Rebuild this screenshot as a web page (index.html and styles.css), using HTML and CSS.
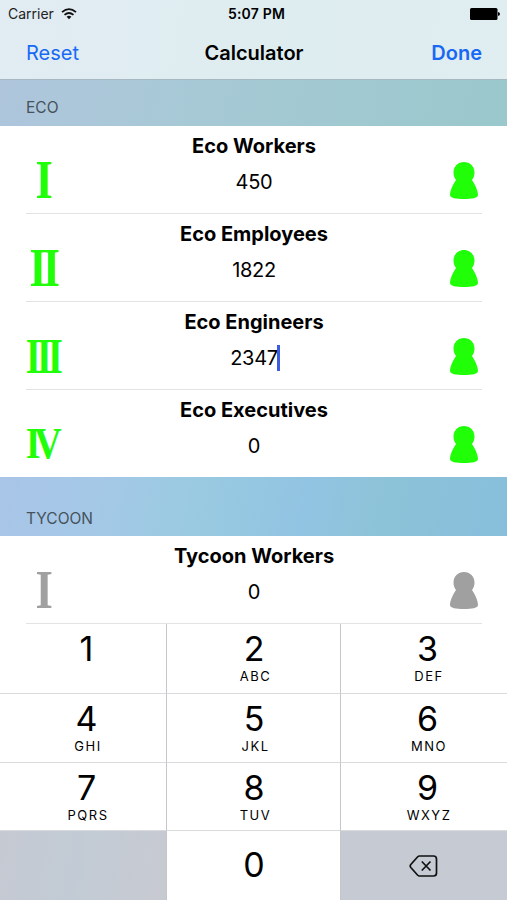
FILE: index.html
```html
<!DOCTYPE html>
<html lang="en">
<head>
    <meta charset="UTF-8">
    <meta name="viewport" content="width=device-width, initial-scale=1.0">
    <title>Calculator</title>
    <link rel="stylesheet" href="styles.css">
</head>
<body>
    <svg class="defs" width="0" height="0">
        <symbol id="person" viewBox="0 0 28 38">
            <path d="M14 0C20 0 24.500 4.500 24.500 10.500C24.500 13.500 23.500 16 22 18C25 22 28 29 28 33C28 36 22 37 14 37S0 36 0 33C0 29 3 22 6 18C4.500 16 3.500 13.500 3.500 10.500C3.500 4.500 8 0 14 0Z"/>
        </symbol>
    </svg>

    <header>
        <div class="status">
            <div class="carrier">
                <span>Carrier</span>
                <svg width="16" height="12" viewBox="0 0 16 12" fill="none" stroke="#111" stroke-width="1.800">
                    <path d="M1 4.100Q8 -1.900 15 4.100M3.500 6.900Q8 3.100 12.500 6.900"/>
                    <path d="M5.600 8.800Q8 6.900 10.400 8.800L8 11.300Z" fill="#111" stroke="none"/>
                </svg>
            </div>
            <div class="time">5:07 PM</div>
            <svg class="battery" width="30" height="12" viewBox="0 0 30 12">
                <rect x="0" y="0" width="27.500" height="12" rx="1.500"/>
                <path d="M28 4Q30 4.500 30 6T28 8Z"/>
            </svg>
        </div>
        <nav>
            <a class="reset">Reset</a>
            <h1>Calculator</h1>
            <a class="done">Done</a>
        </nav>
    </header>

    <h2 class="section eco-head">ECO</h2>
    <ul class="list eco">
        <li>
            <svg class="numeral" width="37" height="40" viewBox="0 0 37 40"><text transform="translate(9.600 37.400) scale(.82 1)" font-size="54.500">I</text></svg>
            <div class="info"><h3>Eco Workers</h3><p>450</p></div>
            <svg class="person" width="28" height="38"><use href="#person"/></svg>
        </li>
        <li>
            <svg class="numeral" width="37" height="40" viewBox="0 0 37 40"><text transform="translate(3.500 37.400) scale(.8 1)" x="0 16.800" font-size="54.500">II</text></svg>
            <div class="info"><h3>Eco Employees</h3><p>1822</p></div>
            <svg class="person" width="28" height="38"><use href="#person"/></svg>
        </li>
        <li>
            <svg class="numeral" width="37" height="40" viewBox="0 0 37 40"><text transform="translate(-.2 35.900) scale(.76 1)" x="0 14.500 29" font-size="51">III</text></svg>
            <div class="info"><h3>Eco Engineers</h3><p>2347<span class="caret"></span></p></div>
            <svg class="person" width="28" height="38"><use href="#person"/></svg>
        </li>
        <li>
            <svg class="numeral" width="37" height="40" viewBox="0 0 37 40"><text transform="translate(-.2 33.200) scale(.87 1)" x="0 9.800" font-size="43.500">IV</text></svg>
            <div class="info"><h3>Eco Executives</h3><p>0</p></div>
            <svg class="person" width="28" height="38"><use href="#person"/></svg>
        </li>
    </ul>

    <h2 class="section tycoon-head">TYCOON</h2>
    <ul class="list tycoon">
        <li>
            <svg class="numeral" width="37" height="40" viewBox="0 0 37 40"><text transform="translate(9.600 37.400) scale(.82 1)" font-size="54.500">I</text></svg>
            <div class="info"><h3>Tycoon Workers</h3><p>0</p></div>
            <svg class="person" width="28" height="38"><use href="#person"/></svg>
        </li>
    </ul>

    <div class="keypad">
        <div class="key"><b>1</b></div>
        <div class="key"><b>2</b><span>ABC</span></div>
        <div class="key"><b>3</b><span>DEF</span></div>
        <div class="key"><b>4</b><span>GHI</span></div>
        <div class="key"><b>5</b><span>JKL</span></div>
        <div class="key"><b>6</b><span>MNO</span></div>
        <div class="key"><b>7</b><span>PQRS</span></div>
        <div class="key"><b>8</b><span>TUV</span></div>
        <div class="key"><b>9</b><span>WXYZ</span></div>
        <div class="key blank"></div>
        <div class="key zero"><b>0</b></div>
        <div class="key delete">
            <svg width="29" height="22" viewBox="0 0 29 22" fill="none" stroke="#111" stroke-width="1.700" stroke-linejoin="round">
                <path d="M10.500 1H24.500Q27.500 1 27.500 4V18Q27.500 21 24.500 21H10.500Q9.500 21 8.500 20L1.800 12.500Q.6 11 1.800 9.500L8.500 2Q9.500 1 10.500 1Z"/>
                <path d="M12.800 6.500L21.500 15.500M21.500 6.500L12.800 15.500"/>
            </svg>
        </div>
    </div>
</body>
</html>
```
FILE: styles.css
```css
body { font-family: Inter, "Liberation Sans", sans-serif; margin: 0; width: 507px; height: 900px; overflow: hidden; background: #fff; color: #000; }
h1, h2, h3, p, ul { margin: 0; padding: 0; }
.defs { display: block; }

header { height: 79px; background: linear-gradient(100deg, #e1ecf3, #deedef 60%, #e0edf1); border-bottom: 1px solid #a6b9c0; }
.status { display: grid; grid-template-columns: 1fr auto 1fr; align-items: center; height: 27px; padding: 0 7px 0 8px; font-size: 14px; }
.carrier { display: flex; align-items: center; gap: 7px; color: #222; }
.time { font-weight: 600; padding-left: 5px; letter-spacing: .2px; }
.battery { justify-self: end; }
nav { display: grid; grid-template-columns: 1fr auto 1fr; align-items: center; height: 51px; padding: 0 25px 0 26px; font-size: 20px; }
nav h1 { font-size: 20px; font-weight: 600; }
nav a { color: #1769f5; }
.done { text-align: right; font-weight: 600; }

.section { box-sizing: border-box; padding-left: 26px; font-size: 15.500px; font-weight: 400; line-height: 20px; color: #45525b; }
.eco-head { height: 46px; padding-top: 18px; background: linear-gradient(100deg, #aec5dc, #aac8d8 25%, #a4c9d3 50%, #9ac8cc); }
.tycoon-head { height: 59px; padding-top: 32px; background: linear-gradient(100deg, #a9c5e8, #a5c8e7 18%, #9acae1 38%, #91c4e2 60%, #8dc3d8 75%, #87bedb); }

.list { list-style: none; }
.list li { position: relative; box-sizing: border-box; display: grid; grid-template-columns: 37px 1fr 37px; height: 88px; padding: 0 25px 0 26px; }
.list li::after { content: ""; position: absolute; left: 26px; right: 25px; bottom: 0; height: 1px; background: #e3e3e5; }
.eco li:last-child::after { display: none; }
.eco { height: 351px; }
.numeral { margin-top: 35px; overflow: visible; font-family: "Liberation Serif", serif; font-weight: 700; }
.person { margin: 36px 0 0 5px; }
.eco svg { fill: #20ff08; }
.tycoon svg { fill: #a0a0a0; }
.info { text-align: center; font-size: 20px; line-height: 24px; }
.info h3 { padding-top: 8px; font-size: 20px; font-weight: 700; }
.info p { padding-top: 12px; letter-spacing: -.3px; }
.caret { display: inline-block; width: 3px; height: 26px; margin: -2px -2px -6px -1px; background: #3c5de0; }

.keypad { display: grid; grid-template-columns: 167px 174px 166px; grid-template-rows: 70px 69px 68px 69px; height: 276px; }
.key { box-sizing: border-box; display: flex; flex-direction: column; align-items: center; border-right: 1px solid #c5c6c9; border-bottom: 1px solid #d9dadc; padding: 4px 0 0 7px; }
.key:nth-child(3n) { border-right: 0; }
.key:nth-child(3n+2) { padding-left: 1px; }
.key b { font-size: 34px; font-weight: 400; line-height: 42px; }
.key span { margin: -2px 0 0 3px; font-size: 13px; line-height: 16px; letter-spacing: 1.500px; }
.key:nth-child(n+10) { border-bottom: 0; }
.key.zero { padding-top: 13px; }
.blank { background: linear-gradient(100deg, #c5c9d2, #c2cbd5 45%, #c8cad1); }
.key.delete { justify-content: center; padding: 0 1px 0 0; background: #c6cbd3; }
```
